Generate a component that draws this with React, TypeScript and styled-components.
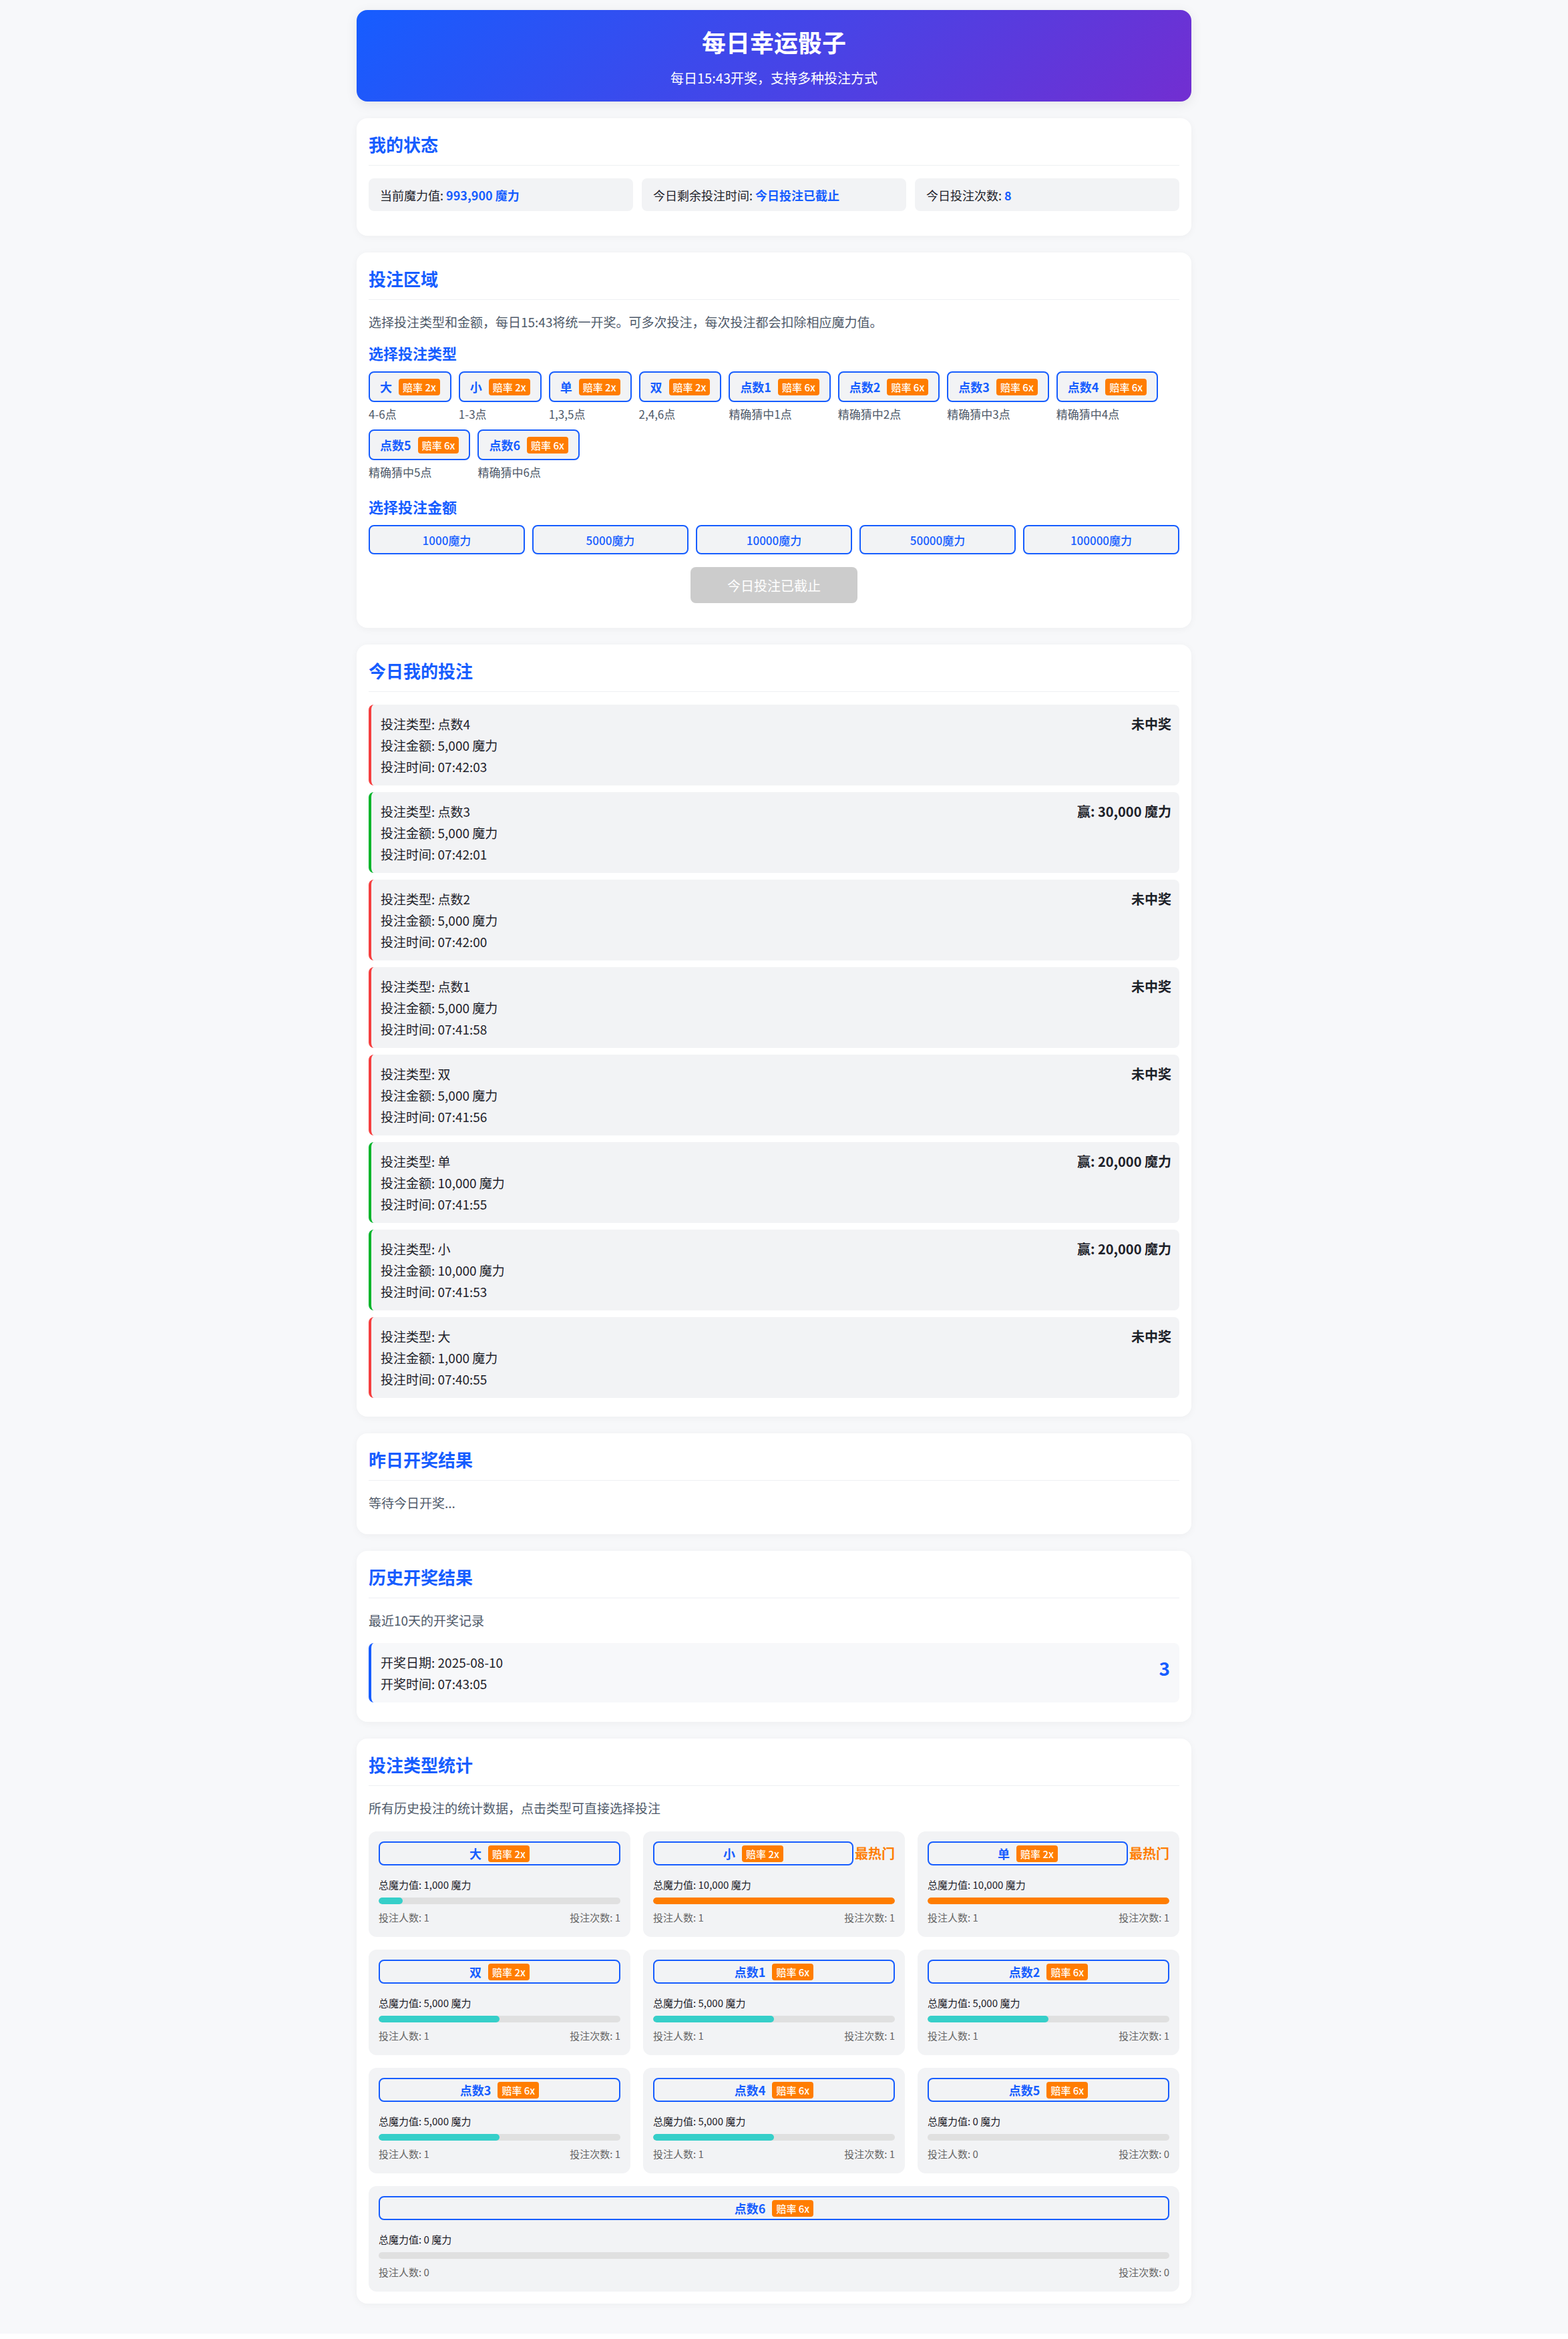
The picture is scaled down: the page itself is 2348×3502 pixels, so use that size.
import React from "react";
import styled, { createGlobalStyle } from "styled-components";

const GlobalStyle = createGlobalStyle`
  html, body { margin: 0; padding: 0; background: #ffffff; }
  body {
    font-family: "Noto Sans CJK SC", "Noto Sans", sans-serif;
    color: #1d2129;
  }
  * { box-sizing: border-box; }
`;

const Page = styled.div`
  background: #f7f8fa;
  display: flex;
  justify-content: center;
  padding: 15px 30px 45px 0;
`;

const Container = styled.div`
  width: 1250px;
  display: flex;
  flex-direction: column;
  gap: 25px;
`;

const Header = styled.header`
  height: 137px;
  padding: 22px 20px 20px;
  border-radius: 16px;
  background: linear-gradient(135deg, #165dff 0%, #722ed1 100%);
  box-shadow: 0 4px 18px rgba(0, 0, 0, 0.08);
  color: #ffffff;
  text-align: center;
`;

const HeaderTitle = styled.h1`
  margin: 0;
  font-size: 36px;
  line-height: 50px;
  font-weight: 700;
`;

const HeaderSub = styled.p`
  margin: 15px 0 0;
  font-size: 20px;
  line-height: 30px;
`;

const Card = styled.section`
  background: #ffffff;
  border-radius: 16px;
  box-shadow: 0 2px 12px rgba(0, 0, 0, 0.045);
  padding: 18px;
`;

const CardTitle = styled.h2`
  margin: 0 0 19px;
  padding: 1px 0 12px;
  border-bottom: 1px solid #eef0f3;
  font-size: 26px;
  line-height: 39px;
  font-weight: 700;
  color: #165dff;
`;

const StatusGrid = styled.div`
  display: grid;
  grid-template-columns: repeat(3, 1fr);
  gap: 13px;
  margin-bottom: 19px;
`;

const StatusItem = styled.div`
  height: 49px;
  display: flex;
  align-items: center;
  padding: 0 17px;
  background: #f2f3f5;
  border-radius: 8px;
  font-size: 18px;
`;

const Highlight = styled.span`
  color: #165dff;
  font-weight: 700;
`;

const Description = styled.p<{ $mb: number; $mt?: number }>`
  margin: ${(p) => p.$mt ?? 0}px 0 ${(p) => p.$mb}px;
  font-size: 19px;
  line-height: 28px;
  color: #4e5969;
`;

const SubHeading = styled.h3`
  margin: 0 0 11px;
  font-size: 22px;
  line-height: 33px;
  font-weight: 700;
  color: #165dff;
`;

const TypeWrap = styled.div`
  display: flex;
  flex-wrap: wrap;
  gap: 11px;
  margin-bottom: 23px;
`;

const TypeOption = styled.div`
  display: flex;
  flex-direction: column;
  align-items: flex-start;
  gap: 5px;
`;

const TypeButton = styled.button`
  height: 46px;
  display: inline-flex;
  align-items: center;
  gap: 10px;
  padding: 0 15px;
  border: 2px solid #165dff;
  border-radius: 8px;
  background: #f2f3f5;
  font-family: inherit;
  cursor: pointer;
`;

const TypeLabel = styled.span`
  font-size: 18px;
  line-height: 26px;
  font-weight: 700;
  color: #165dff;
`;

const OddsBadge = styled.span`
  display: inline-block;
  padding: 2px 6px;
  border-radius: 4px;
  background: #ff7d00;
  color: #ffffff;
  font-size: 15px;
  line-height: 21px;
  font-weight: 500;
  white-space: nowrap;
`;

const TypeHint = styled.span`
  font-size: 17px;
  line-height: 25px;
  color: #4e5969;
`;

const AmountGrid = styled.div`
  display: grid;
  grid-template-columns: repeat(5, 1fr);
  gap: 11px;
  margin-bottom: 19px;
`;

const AmountButton = styled.button`
  height: 44px;
  border: 2px solid #165dff;
  border-radius: 8px;
  background: #f2f3f5;
  color: #165dff;
  font-family: inherit;
  font-size: 17px;
  font-weight: 500;
  cursor: pointer;
`;

const SubmitRow = styled.div`
  display: flex;
  justify-content: center;
  margin-bottom: 19px;
`;

const SubmitButton = styled.button`
  width: 250px;
  height: 54px;
  border: none;
  border-radius: 8px;
  background: #cccccc;
  color: #ffffff;
  font-family: inherit;
  font-size: 20px;
  cursor: not-allowed;
`;

const BetList = styled.div`
  display: flex;
  flex-direction: column;
  gap: 10px;
  padding-bottom: 10px;
`;

const BetItem = styled.div<{ $won: boolean }>`
  display: flex;
  justify-content: space-between;
  align-items: flex-start;
  padding: 15px 12px 15px 14px;
  background: #f2f3f5;
  border-left: 4px solid ${(p) => (p.$won ? "#00b42a" : "#f53f3f")};
  border-radius: 8px;
`;

const Lines = styled.div`
  display: flex;
  flex-direction: column;
  gap: 5px;
`;

const Line = styled.div`
  font-size: 19px;
  line-height: 27px;
  color: #1d2129;
`;

const Result = styled.div`
  font-size: 20px;
  line-height: 27px;
  font-weight: 700;
  color: #1d2129;
`;

const WaitText = styled.p`
  margin: 2px 0 15px;
  font-size: 19px;
  line-height: 28px;
  color: #4e5969;
`;

const HistoryItem = styled.div`
  display: flex;
  justify-content: space-between;
  align-items: center;
  padding: 15px 14px;
  margin-bottom: 11px;
  background: #f7f8fa;
  border-left: 4px solid #165dff;
  border-radius: 8px;
`;

const DiceNumber = styled.div`
  font-size: 28px;
  line-height: 28px;
  font-weight: 700;
  color: #165dff;
  margin-bottom: 15px;
`;

const StatsGrid = styled.div`
  display: grid;
  grid-template-columns: repeat(3, 1fr);
  gap: 19px;
`;

const StatCard = styled.div<{ $full?: boolean }>`
  grid-column: ${(p) => (p.$full ? "1 / -1" : "auto")};
  padding: 15px 15px 18px;
  background: #f2f3f5;
  border-radius: 12px;
`;

const StatHead = styled.div`
  display: flex;
  align-items: center;
  margin-bottom: 18px;
`;

const StatButton = styled.button`
  flex: 1;
  height: 36px;
  display: flex;
  align-items: center;
  justify-content: center;
  gap: 10px;
  border: 2px solid #165dff;
  border-radius: 8px;
  background: #f2f3f5;
  font-family: inherit;
  cursor: pointer;
`;

const HotTag = styled.span`
  margin-left: 2px;
  font-size: 20px;
  line-height: 26px;
  font-weight: 700;
  color: #ff7d00;
`;

const StatTotal = styled.div`
  font-size: 15px;
  line-height: 22px;
  color: #1d2129;
  margin-bottom: 8px;
`;

const Progress = styled.div`
  height: 10px;
  border-radius: 5px;
  background: #e0e0e0;
  overflow: hidden;
  margin-bottom: 9px;
`;

const ProgressFill = styled.div<{ $hot: boolean }>`
  height: 100%;
  border-radius: 5px;
  background: ${(p) => (p.$hot ? "#ff7d00" : "#36cfc9")};
`;

const StatFoot = styled.div`
  display: flex;
  justify-content: space-between;
  font-size: 15px;
  line-height: 22px;
  color: #666666;
`;

const betTypes = [
  { name: "大", odds: 2, hint: "4-6点" },
  { name: "小", odds: 2, hint: "1-3点" },
  { name: "单", odds: 2, hint: "1,3,5点" },
  { name: "双", odds: 2, hint: "2,4,6点" },
  { name: "点数1", odds: 6, hint: "精确猜中1点" },
  { name: "点数2", odds: 6, hint: "精确猜中2点" },
  { name: "点数3", odds: 6, hint: "精确猜中3点" },
  { name: "点数4", odds: 6, hint: "精确猜中4点" },
  { name: "点数5", odds: 6, hint: "精确猜中5点" },
  { name: "点数6", odds: 6, hint: "精确猜中6点" },
];

const amounts = [1000, 5000, 10000, 50000, 100000];

const bets = [
  { type: "点数4", amount: "5,000", time: "07:42:03", result: "未中奖", won: false },
  { type: "点数3", amount: "5,000", time: "07:42:01", result: "赢: 30,000 魔力", won: true },
  { type: "点数2", amount: "5,000", time: "07:42:00", result: "未中奖", won: false },
  { type: "点数1", amount: "5,000", time: "07:41:58", result: "未中奖", won: false },
  { type: "双", amount: "5,000", time: "07:41:56", result: "未中奖", won: false },
  { type: "单", amount: "10,000", time: "07:41:55", result: "赢: 20,000 魔力", won: true },
  { type: "小", amount: "10,000", time: "07:41:53", result: "赢: 20,000 魔力", won: true },
  { type: "大", amount: "1,000", time: "07:40:55", result: "未中奖", won: false },
];

const stats = [
  { name: "大", odds: 2, total: 1000, users: 1, count: 1 },
  { name: "小", odds: 2, total: 10000, users: 1, count: 1 },
  { name: "单", odds: 2, total: 10000, users: 1, count: 1 },
  { name: "双", odds: 2, total: 5000, users: 1, count: 1 },
  { name: "点数1", odds: 6, total: 5000, users: 1, count: 1 },
  { name: "点数2", odds: 6, total: 5000, users: 1, count: 1 },
  { name: "点数3", odds: 6, total: 5000, users: 1, count: 1 },
  { name: "点数4", odds: 6, total: 5000, users: 1, count: 1 },
  { name: "点数5", odds: 6, total: 0, users: 0, count: 0 },
  { name: "点数6", odds: 6, total: 0, users: 0, count: 0 },
];

const maxTotal = Math.max(...stats.map((s) => s.total));

export default function App() {
  return (
    <>
      <GlobalStyle />
      <Page>
        <Container>
          <Header>
            <HeaderTitle>每日幸运骰子</HeaderTitle>
            <HeaderSub>每日15:43开奖，支持多种投注方式</HeaderSub>
          </Header>

          <Card>
            <CardTitle>我的状态</CardTitle>
            <StatusGrid>
              <StatusItem>
                当前魔力值:&nbsp;<Highlight>993,900 魔力</Highlight>
              </StatusItem>
              <StatusItem>
                今日剩余投注时间:&nbsp;<Highlight>今日投注已截止</Highlight>
              </StatusItem>
              <StatusItem>
                今日投注次数:&nbsp;<Highlight>8</Highlight>
              </StatusItem>
            </StatusGrid>
          </Card>

          <Card>
            <CardTitle>投注区域</CardTitle>
            <Description $mb={16}>
              选择投注类型和金额，每日15:43将统一开奖。可多次投注，每次投注都会扣除相应魔力值。
            </Description>
            <SubHeading>选择投注类型</SubHeading>
            <TypeWrap>
              {betTypes.map((t) => (
                <TypeOption key={t.name}>
                  <TypeButton>
                    <TypeLabel>{t.name}</TypeLabel>
                    <OddsBadge>赔率 {t.odds}x</OddsBadge>
                  </TypeButton>
                  <TypeHint>{t.hint}</TypeHint>
                </TypeOption>
              ))}
            </TypeWrap>
            <SubHeading>选择投注金额</SubHeading>
            <AmountGrid>
              {amounts.map((a) => (
                <AmountButton key={a}>{a}魔力</AmountButton>
              ))}
            </AmountGrid>
            <SubmitRow>
              <SubmitButton disabled>今日投注已截止</SubmitButton>
            </SubmitRow>
          </Card>

          <Card>
            <CardTitle>今日我的投注</CardTitle>
            <BetList>
              {bets.map((b) => (
                <BetItem key={b.time} $won={b.won}>
                  <Lines>
                    <Line>投注类型: {b.type}</Line>
                    <Line>投注金额: {b.amount} 魔力</Line>
                    <Line>投注时间: {b.time}</Line>
                  </Lines>
                  <Result>{b.result}</Result>
                </BetItem>
              ))}
            </BetList>
          </Card>

          <Card>
            <CardTitle>昨日开奖结果</CardTitle>
            <WaitText>等待今日开奖...</WaitText>
          </Card>

          <Card>
            <CardTitle>历史开奖结果</CardTitle>
            <Description $mb={20}>最近10天的开奖记录</Description>
            <HistoryItem>
              <Lines>
                <Line>开奖日期: 2025-08-10</Line>
                <Line>开奖时间: 07:43:05</Line>
              </Lines>
              <DiceNumber>3</DiceNumber>
            </HistoryItem>
          </Card>

          <Card>
            <CardTitle>投注类型统计</CardTitle>
            <Description $mb={21}>所有历史投注的统计数据，点击类型可直接选择投注</Description>
            <StatsGrid>
              {stats.map((s, i) => {
                const hot = s.total > 0 && s.total === maxTotal;
                const pct = maxTotal > 0 ? (s.total / maxTotal) * 100 : 0;
                return (
                  <StatCard key={s.name} $full={i === stats.length - 1}>
                    <StatHead>
                      <StatButton>
                        <TypeLabel>{s.name}</TypeLabel>
                        <OddsBadge>赔率 {s.odds}x</OddsBadge>
                      </StatButton>
                      {hot && <HotTag>最热门</HotTag>}
                    </StatHead>
                    <StatTotal>总魔力值: {s.total.toLocaleString("en-US")} 魔力</StatTotal>
                    <Progress>
                      <ProgressFill $hot={hot} style={{ width: `${pct}%` }} />
                    </Progress>
                    <StatFoot>
                      <span>投注人数: {s.users}</span>
                      <span>投注次数: {s.count}</span>
                    </StatFoot>
                  </StatCard>
                );
              })}
            </StatsGrid>
          </Card>
        </Container>
      </Page>
    </>
  );
}
